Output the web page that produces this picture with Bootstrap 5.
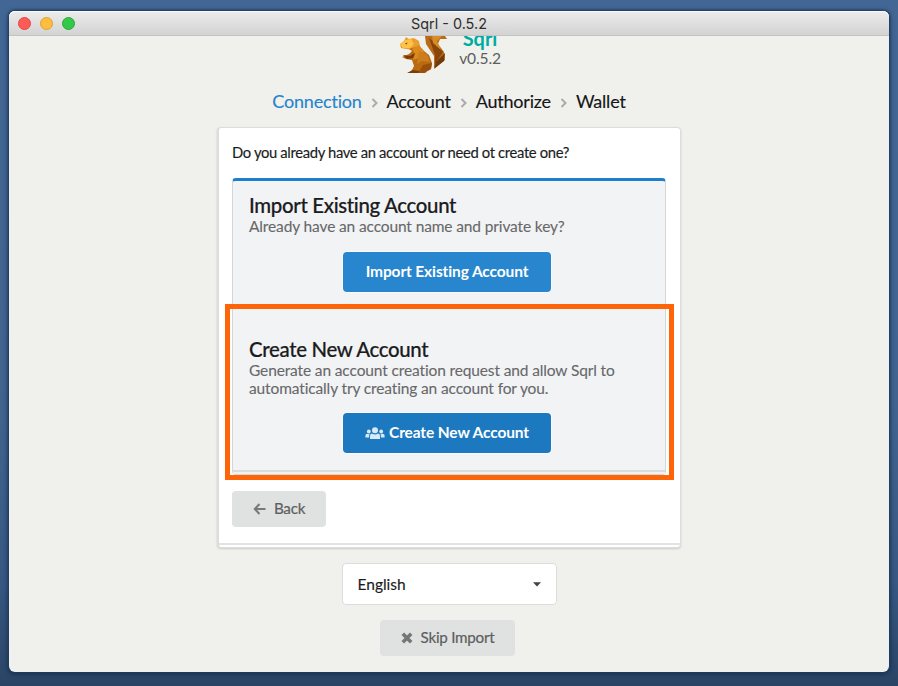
<!DOCTYPE html>
<html lang="en">
<head>
<meta charset="utf-8">
<meta name="viewport" content="width=device-width, initial-scale=1">
<title>Sqrl - 0.5.2</title>
<link href="https://cdn.jsdelivr.net/npm/bootstrap@5.3.0/dist/css/bootstrap.min.css" rel="stylesheet">
<style>
html, body { height: 100%; overflow: hidden; }
body { font-family: Lato, "Liberation Sans", sans-serif; font-size: 15px; line-height: 18px; color: #1b1c1d;
  background: linear-gradient(#436795, #41648f 60%, #375882 85%, #2a4465); padding: 11px 9px 14px; }
.app-window { height: 661px; background: #f0f1ed; border-radius: 6px; box-shadow: 0 0 2px 1px #203d62, 0 1px 5px 1px rgba(10,28,55,.6); }
.title-bar { height: 25px; background: linear-gradient(#ececec, #d3d3d3); border-bottom: 1px solid #c3c3c1; box-shadow: inset 0 1px #fafafa;
  font: 14.4px/25px Inter, sans-serif; color: #2d2d2d; flex: none; }
.lights { left: 9px; top: 6px; gap: 9px; }
.light { width: 13px; height: 13px; border-radius: 50%; border: 1px solid; }
.light-close { background: #fc5b57; border-color: #df4744; }
.light-min { background: #fdbd3e; border-color: #de9f34; }
.light-zoom { background: #34c84a; border-color: #27aa35; }
.brand-row { height: 44px; flex: none; }
.squirrel { width: 50px; height: 44px; margin-left: 3px; }
.brand-text { margin-left: 9px; }
.brand-name { color: #00aca2; font-size: 20px; font-weight: 700; line-height: 20px; margin-top: -8px; }
.brand-version { color: #5d5e5d; font-size: 15.6px; line-height: 19px; margin-top: 1px; letter-spacing: -.15px; }
.steps { font-size: 18px; line-height: 24px; margin-top: 10px; height: 37px; color: #151617; letter-spacing: -.2px; -webkit-text-stroke: .15px; }
.steps span { margin-top: -1px; }
.steps .step-on { color: #2583cc; }
.steps svg { width: 7px; height: 10px; margin: 2px 9px 0 9px; }
.panel { width: 464px; height: 421px; background: #fff; border: 1px solid #dcdddc; border-left-width: 2px; border-radius: 4px; box-shadow: 0 1px 2px rgba(34,36,38,.18); padding: 14px 14px 0 13px; }
.question { font-size: 14.8px; line-height: 20px; height: 36px; letter-spacing: -.35px; -webkit-text-stroke: .15px; }
.choices { width: 434px; height: 297px; background: #f2f3f5; border: 1px solid #d5d6d7; border-top: 3px solid #1b7fcc; border-radius: 4px; padding: 13px 15px 0 16px; }
.choices h2 { font-size: 20.4px; line-height: 23px; margin: 0; color: #1b1c1d; letter-spacing: -.33px; -webkit-text-stroke: .2px; }
.choices p { color: #676869; font-size: 15.5px; line-height: 18px; margin: 0; letter-spacing: -.13px; -webkit-text-stroke: .1px; }
.choice-import { height: 143px; }
.choice-create { height: 132px; padding-top: 1px; }
.btn-app { width: 208px; height: 40px; margin: 17px 0 0 94px; padding: 0; border: 0; border-radius: 4px; font-size: 15.5px; font-weight: 700; letter-spacing: -.12px; color: #fff; background: #2886ce; box-shadow: 0 0 0 1px #f8fafb; }
.btn-app-dark { background: #1d79bf; margin-top: 16px; }
.stack-line { height: 4px; margin: 0 -15px 0 -16px; border-top: 2px solid #d9dbdc; background: #f0f1f1; flex: none; }
.panel-line { height: 4px; margin: 0 -14px 0 -13px; border-top: 2px solid #e2e3e4; flex: none; }
.btn-soft { background: #e0e1e1; color: #5d5e5f; border: 0; border-radius: 4px; font-size: 15.2px; padding: 0 0 2px; letter-spacing: -.25px; -webkit-text-stroke: .2px; }
.btn-soft svg { position: relative; top: 1px; -webkit-text-stroke: 0; }
.btn-back { width: 94px; height: 36px; margin-top: 16px; gap: 8px; }
.btn-skip { width: 135px; height: 36px; margin: 15px 3px 0 0; gap: 8px; }
.language { width: 215px; height: 42px; margin-top: 15px; background: #fff; border: 1px solid #dcddde; border-radius: 4px; padding: 0 15px; font-size: 15.5px; flex: none; -webkit-text-stroke: .15px; }
.highlight-frame { left: 225px; top: 304px; width: 449px; height: 176px; border: 5px solid #ff6508; pointer-events: none; }
</style>
</head>
<body>
<div class="app-window d-flex flex-column">
  <header class="title-bar position-relative text-center rounded-top">
    <div class="lights position-absolute d-flex"><span class="light light-close"></span><span class="light light-min"></span><span class="light light-zoom"></span></div>
    Sqrl - 0.5.2
  </header>
  <main class="d-flex flex-column align-items-center flex-grow-1 overflow-hidden">
    <div class="brand-row d-flex justify-content-center overflow-hidden">
      <svg class="squirrel" viewBox="0 0 50 44">
        <path fill="#e9a030" d="M0 8 4 5 6 1 9 3 14 2 19 5 20 10 17 14 6 13 1 12Z"/>
        <path fill="#ffc246" d="M0 8 6 4 11 3 14 8 10 12 3 12Z"/>
        <path fill="#713d08" d="m5 7.500 2.500-1-.8 2Z"/>
        <path fill="#b96a12" d="m9 13 10-3 5 5 5 4 3 8-1 6-7 4H8l4-3 2-4-2-6-6-1-4-2 7-3 3-3Z"/>
        <path fill="#dc8a1d" d="m12 13 7-4 5 6-2 6-9 3 2-6Z"/>
        <path fill="#7b3b07" d="m3 19 7 1 5-3-2 5-6 1Zm4 18 6-3 6 1 8 2Z"/>
        <path fill="#cb7e1c" d="m19 15 8 3 3 8-8-1-5 3Z"/>
        <path fill="#9a500b" d="m32 27-1 6-7 4h-6l5-8Z"/>
        <path fill="#b96b17" d="M25 0h20l2 3-7 0-2 5 6 8 1 8-11 8 0-12-8-12Z"/>
        <path fill="#8a4508" d="m29 2 6 5 8 9-8 12 0-9Z"/>
        <path fill="#d78c27" d="M32 0h10l-5 5 4 9-8-7Z"/>
        <path fill="#70390a" d="m45 17-1 8-10 8 2-7Z"/>
      </svg>
      <div class="brand-text text-center">
        <div class="brand-name">Sqrl</div>
        <div class="brand-version">v0.5.2</div>
      </div>
    </div>
    <nav class="steps d-flex justify-content-center align-items-start flex-shrink-0" aria-label="Setup">
      <span class="step-on">Connection</span>
      <svg class="mt-2" viewBox="0 0 7 10" fill="none" stroke="#aaabaa" stroke-width="2"><path d="m1.500 1 4 4-4 4"/></svg>
      <span>Account</span>
      <svg class="mt-2" viewBox="0 0 7 10" fill="none" stroke="#aaabaa" stroke-width="2"><path d="m1.500 1 4 4-4 4"/></svg>
      <span>Authorize</span>
      <svg class="mt-2" viewBox="0 0 7 10" fill="none" stroke="#aaabaa" stroke-width="2"><path d="m1.500 1 4 4-4 4"/></svg>
      <span>Wallet</span>
    </nav>
    <section class="panel d-flex flex-column flex-shrink-0">
      <div class="question">Do you already have an account or need ot create one?</div>
      <div class="choices d-flex flex-column flex-shrink-0">
        <div class="choice-import">
          <h2>Import Existing Account</h2>
          <p>Already have an account name and private key?</p>
          <button class="btn btn-app" type="button">Import Existing Account</button>
        </div>
        <div class="choice-create">
          <h2>Create New Account</h2>
          <p>Generate an account creation request and allow Sqrl to automatically try creating an account for you.</p>
          <button class="btn btn-app btn-app-dark d-flex align-items-center justify-content-center" type="button">
            <svg class="me-1" width="20" height="13" viewBox="0 0 20 13" fill="#d9eaf7"><circle cx="10" cy="3.2" r="3"/><circle cx="3.8" cy="4.5" r="1.9"/><circle cx="16.2" cy="4.5" r="1.9"/><path d="M5 12V9q0-2 2-2.400Q10 8.500 13 6.600q2 .4 2 2.400v3ZM.4 10.500V8.700Q.4 7 2.200 6.800q1.500.7 2.700 0-.8 1-.8 2.200v1.500ZM19.600 10.500V8.700q0-1.700-1.800-1.900-1.500.7-2.700 0 .8 1 .8 2.200v1.500Z"/></svg>
            Create New Account
          </button>
        </div>
        <div class="stack-line mt-auto"></div>
      </div>
      <button class="btn btn-soft btn-back d-flex align-items-center justify-content-center flex-shrink-0" type="button">
        <svg width="13" height="12" viewBox="0 0 13 12" fill="none" stroke="#777978" stroke-width="2"><path d="M6.500 1 1.700 6l4.800 5M2 6h10.500"/></svg>
        Back
      </button>
      <div class="panel-line mt-auto"></div>
    </section>
    <div class="language d-flex align-items-center justify-content-between" role="listbox">
      <span>English</span>
      <svg width="8" height="5" viewBox="0 0 8 5"><path fill="#414243" d="M0 .3h8L4 4.500Z"/></svg>
    </div>
    <button class="btn btn-soft btn-skip d-flex align-items-center justify-content-center flex-shrink-0" type="button">
      <svg width="12" height="12" viewBox="0 0 12 12" stroke="#757676" stroke-width="3.600"><path d="m1.800 1.800 8.400 8.400m0-8.400-8.400 8.400"/></svg>
      Skip Import
    </button>
  </main>
</div>
<div class="highlight-frame position-absolute"></div>
<script src="https://cdn.jsdelivr.net/npm/bootstrap@5.3.0/dist/js/bootstrap.bundle.min.js"></script>
</body>
</html>
